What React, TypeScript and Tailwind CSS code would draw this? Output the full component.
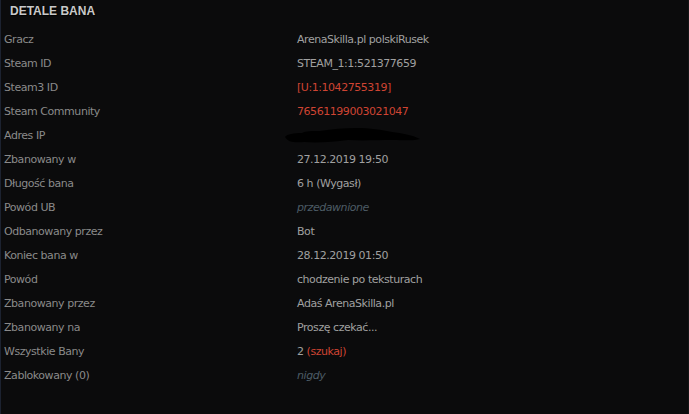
import React from "react";

type Row = { label: string; value: React.ReactNode };

const red = "text-[#cf4433]";
const muted = "italic text-[#4d5c66]";

const rows: Row[] = [
  { label: "Gracz", value: "ArenaSkilla.pl polskiRusek" },
  { label: "Steam ID", value: "STEAM_1:1:521377659" },
  { label: "Steam3 ID", value: <span className={red}>[U:1:1042755319]</span> },
  { label: "Steam Community", value: <span className={red}>76561199003021047</span> },
  {
    label: "Adres IP",
    value: (
      <svg width="140" height="22" viewBox="0 0 140 22" className="-ml-[15px] mt-[-2px]">
        <path
          d="M3 13 C5 10 12 9 20 9 C24 7 30 7 38 7 C50 5 62 4 74 4 C88 4 100 6 110 8 C120 9 130 11 138 15 C132 17 122 16 110 16 C96 16 80 17 66 16 C52 18 34 19 22 18 C12 19 6 18 3 13 Z"
          fill="#000"
        />
      </svg>
    ),
  },
  { label: "Zbanowany w", value: "27.12.2019 19:50" },
  { label: "Długość bana", value: "6 h (Wygasł)" },
  { label: "Powód UB", value: <span className={muted}>przedawnione</span> },
  { label: "Odbanowany przez", value: "Bot" },
  { label: "Koniec bana w", value: "28.12.2019 01:50" },
  { label: "Powód", value: "chodzenie po teksturach" },
  { label: "Zbanowany przez", value: "Adaś ArenaSkilla.pl" },
  { label: "Zbanowany na", value: "Proszę czekać..." },
  {
    label: "Wszystkie Bany",
    value: (
      <span>
        2 <span className={red}>(szukaj)</span>
      </span>
    ),
  },
  { label: "Zablokowany (0)", value: <span className={muted}>nigdy</span> },
];

export default function App() {
  return (
    <div
      className="w-[689px] h-[414px] bg-[#0b0b0c] border-l border-[#1c2230] border-r border-r-[#141416] flex flex-col text-[11px] tracking-[-0.45px] overflow-hidden"
      style={{ fontFamily: '"DejaVu Sans", Verdana, sans-serif' }}
    >
      <div className="h-[28px] pl-[9px] pt-[2px] flex items-start">
        <span
          className="font-bold text-[12px] tracking-normal text-[#c9c9c9] [text-shadow:1px_1px_1px_#000]"
          style={{ fontFamily: '"Liberation Sans", Arial, sans-serif' }}
        >
          DETALE BANA
        </span>
      </div>
      <div className="flex flex-col">
        {rows.map((r) => (
          <div key={r.label} className="h-[24px] flex items-center">
            <div className="w-[296px] pl-[3px] text-[#8a8a8a]">{r.label}</div>
            <div className="flex-1 text-[#a0a0a0] flex items-center">{r.value}</div>
          </div>
        ))}
      </div>
    </div>
  );
}
